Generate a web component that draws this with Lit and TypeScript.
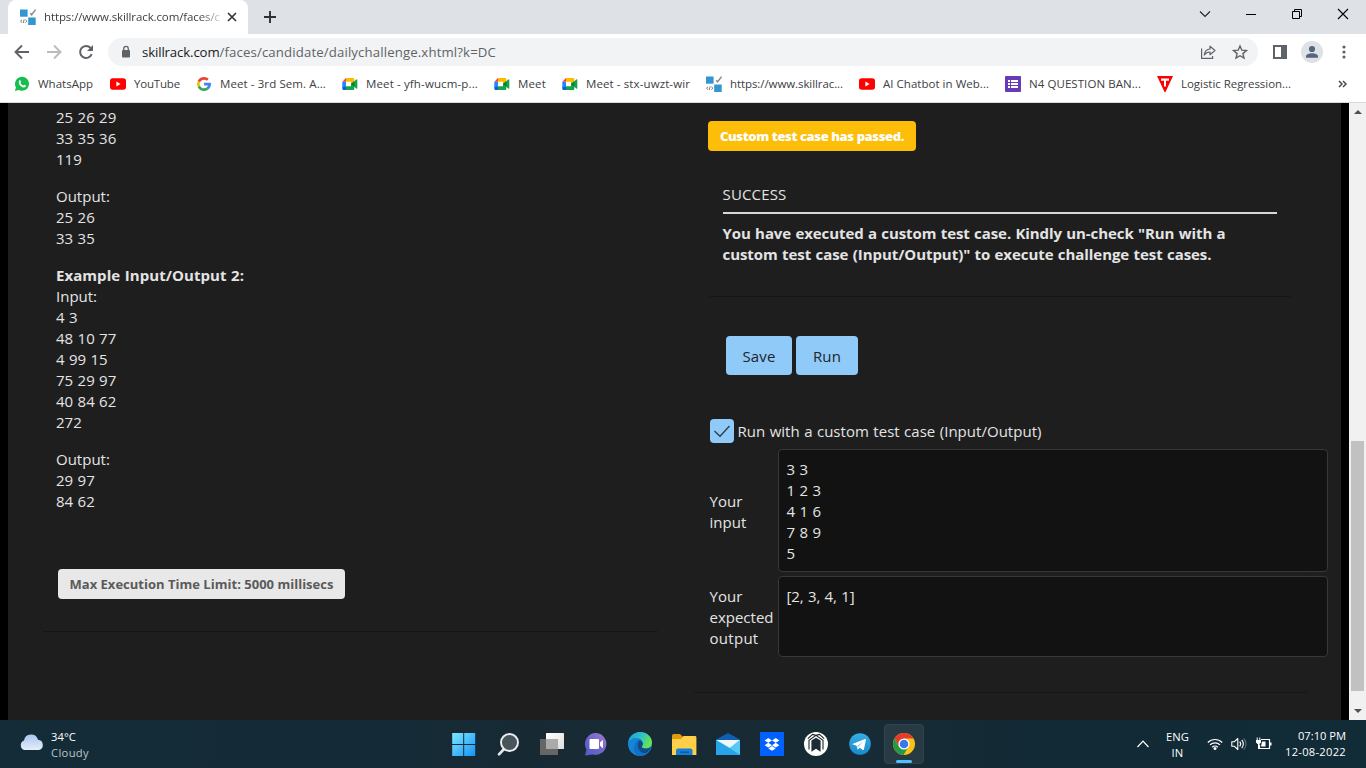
import { LitElement, html, css } from "lit";
import { customElement, property } from "lit/decorators.js";

/** One line of text whose tracking is adjusted so that it fills a given width. */
@customElement("fit-text")
class FitText extends LitElement {
  @property({ type: Number }) w = 0;
  static styles = css`
    :host { display: inline-block; white-space: pre; }
    .run { display: inline-block; white-space: pre; }
  `;
  render() {
    return html`<span class="run"><slot></slot></span>`;
  }
  firstUpdated() {
    const n = (this.textContent || "").length;
    const natural = this.renderRoot.querySelector(".run")!.getBoundingClientRect().width;
    if (n && this.w && natural) {
      this.style.letterSpacing = `${((this.w - natural) / n).toFixed(3)}px`;
      this.style.width = `${this.w}px`;
    }
  }
}

const skillIcon = html`<svg width="16" height="16" viewBox="0 0 16 16">
  <rect x="0" y="0.500" width="7.600" height="7.200" fill="#3397cf" /><rect x="8.200" y="8.500" width="7.500" height="7.500" fill="#3397cf" />
  <path d="M10.200 4.200l1.400 1.600L15.600 .6" fill="none" stroke="#8b8b8b" stroke-width="1.500" />
  <path d="M2 10.800L.5 12.200 2 13.600M5.400 10.800l1.500 1.400-1.500 1.400M4.200 10.400l-1 3.600" fill="none" stroke="#777" stroke-width="1" /></svg>`;

const youtube = html`<svg width="16" height="16" viewBox="0 0 16 16"><rect y="2.200" width="16" height="11.600" rx="2.800" fill="#f00" /><path d="M6.400 5.600v4.800L10.600 8z" fill="#fff" /></svg>`;

const meet = html`<svg width="16" height="16" viewBox="0 0 16 16">
  <path d="M.3 5.800L4 2v3.800z" fill="#ea4335" /><path d="M.3 5.800H4v4.600H.3z" fill="#2684fc" />
  <path d="M.3 10.200H4V14H1.500A1.200 1.200 0 0 1 .3 12.800z" fill="#0066da" />
  <path d="M4 2h7.300a1 1 0 0 1 1 1v3.600L9 9V5.800H4z" fill="#ffba00" />
  <path d="M4 10.200h5V7.500l3.300-1v6.500a1 1 0 0 1-1 1H4z" fill="#16a34f" />
  <path d="M9 8l5.300-4.600c.5-.4 1-.1 1 .4v8.400c0 .5-.5.8-1 .4z" fill="#16a34f" /><path d="M9 8l3.300-2.800v5.600z" fill="#00832d" /></svg>`;

const whatsapp = html`<svg width="16" height="16" viewBox="0 0 16 16"><path d="M1 15l.9-3.700A7 7 0 1 1 4.700 14z" fill="#14bf4d" />
  <path d="M5.300 4.400c.5-.5 1-.3 1.200.2l.5 1.200c.2.5-.5.9-.5 1.200.6 1.200 1.500 2 2.700 2.500.4 0 .8-1 1.200-.8l1.400.7c.4.2.2 1-.2 1.400-1.200 1.100-3 .6-4.600-.6C5.300 9 4 6.700 5.300 4.400z" fill="#fff" /></svg>`;

const google = html`<svg width="16" height="16" viewBox="0 0 48 48">
  <path fill="#EA4335" d="M24 11c3.300 0 6.200 1.200 8.500 3.300l5.700-5.700C34.500 5.200 29.600 3 24 3 15.800 3 8.700 7.700 5.200 14.600l6.700 5.200C13.500 14.800 18.300 11 24 11z" />
  <path fill="#FBBC05" d="M11.900 28.200a12.700 12.700 0 0 1 0-8.400l-6.700-5.200a21 21 0 0 0 0 18.800z" />
  <path fill="#34A853" d="M24 45c5.600 0 10.400-1.900 13.900-5.100l-6.500-5.100C29.600 36.100 27.100 37 24 37c-5.700 0-10.500-3.800-12.100-8.800l-6.700 5.200C8.700 40.300 15.800 45 24 45z" />
  <path fill="#4285F4" d="M44.500 20H24v8.500h11.800c-.6 2.700-2.100 4.900-4.400 6.300l6.500 5.100C42 36.200 45 30.500 45 24c0-1.400-.2-2.700-.5-4z" /></svg>`;

const listIcon = html`<svg width="16" height="16" viewBox="0 0 16 16"><rect width="16" height="16" rx="1" fill="#673ab7" />
  <path d="M3 4h2v2H3zM3 7h2v2H3zM3 10h2v2H3zM6 4h7v2H6zM6 7h7v2H6zM6 10h7v2H6z" fill="#fff" /></svg>`;

const tIcon = html`<svg width="16" height="16" viewBox="0 0 16 16"><path d="M0 0h16L8.500 16h-1z" fill="#f00" /><path d="M4 2.500h8v2.300H9V10.500H7V4.800H4z" fill="#fff" /></svg>`;

const bookmarks = [
  { icon: whatsapp, label: "WhatsApp", w: 55, next: 17 },
  { icon: youtube, label: "YouTube", w: 46, next: 16 },
  { icon: google, label: "Meet - 3rd Sem. A...", w: 106, next: 16 },
  { icon: meet, label: "Meet - yfh-wucm-p...", w: 112, next: 16 },
  { icon: meet, label: "Meet", w: 28, next: 16 },
  { icon: meet, label: "Meet - stx-uwzt-wir", w: 104, next: 16 },
  { icon: skillIcon, label: "https://www.skillrac...", w: 113, next: 16 },
  { icon: youtube, label: "AI Chatbot in Web...", w: 106, next: 16 },
  { icon: listIcon, label: "N4 QUESTION BAN...", w: 112, next: 16 },
  { icon: tIcon, label: "Logistic Regression...", w: 110, next: 0 },
];

const searchApp = html`<svg width="24" height="24" viewBox="0 0 24 24"><path d="M8.500 16.500L3 22.300" stroke="#e8e8e8" stroke-width="2.600" stroke-linecap="round" />
  <circle cx="13.500" cy="10.500" r="8.500" fill="#47555d" stroke="#eee" stroke-width="1.900" /></svg>`;

const apps = [
  html`<svg width="24" height="24" viewBox="0 0 24 24"><defs><linearGradient id="w" x1="0" y1="0" x2="1" y2="1"><stop offset="0" stop-color="#7de8ff" /><stop offset="1" stop-color="#1492f5" /></linearGradient></defs>
    <path d="M.2 1h11v11h-11zM12.200 1h11v11h-11zM.2 13h11v11h-11zM12.200 13h11v11h-11z" fill="url(#w)" /></svg>`,
  searchApp,
  html`<svg width="24" height="24" viewBox="0 0 24 24"><defs><linearGradient id="t" x1="0" y1="0" x2="1" y2="1"><stop offset="0" stop-color="#fff" /><stop offset="1" stop-color="#ddd" /></linearGradient></defs>
    <rect x="6" y="1" width="18" height="16" rx=".6" fill="url(#t)" /><rect x="0" y="7" width="18" height="16" rx=".6" fill="#666" /><rect x="6" y="7" width="12" height="10" fill="#aaa" /></svg>`,
  html`<svg width="24" height="24" viewBox="0 0 24 24"><defs><linearGradient id="c" x1="0" y1="1" x2="1" y2="0"><stop offset="0" stop-color="#5059c9" /><stop offset=".55" stop-color="#7468ca" /><stop offset="1" stop-color="#a87bd1" /></linearGradient></defs>
    <path d="M12.500 1a11 11 0 1 1-4.200 21.500L2 23.500c-.6 0-1-.5-.8-1l1.300-5A11 11 0 0 1 12.500 1z" fill="url(#c)" />
    <rect x="5.500" y="7" width="9.500" height="10" rx="1" fill="#fff" /><path d="M16 10.600l2.400-2.300c.3-.2.600 0 .6.300v7c0 .3-.3.500-.6.300L16 13.500z" fill="#fff" /></svg>`,
  html`<svg width="24" height="24" viewBox="0 0 24 24"><defs><linearGradient id="e1" x1="0" y1="0" x2="1" y2=".4"><stop offset="0" stop-color="#209fd8" /><stop offset=".55" stop-color="#2cc1c7" /><stop offset="1" stop-color="#65e353" /></linearGradient></defs>
    <circle cx="12" cy="12" r="12" fill="#1585d8" />
    <path d="M.2 11C.8 5 5.600 0 12 0c7 0 12 5 12 10.500 0 3.800-2.800 6-6 6-2.500 0-4.300-.9-4.300-1.800 0-.7 1.200-1.200 1.200-3C14.900 9 12.500 6 8.500 6 4 6 1 8 .2 11z" fill="url(#e1)" />
    <path d="M7.200 14.500c0-3.500 2.200-5.500 4.200-6.200 2.300.6 3.500 2 3.500 3.500 0 1.700-1.200 2.200-1.200 3 0 .9 1.800 1.800 4.300 1.800 1.700 0 3.200-.7 4.300-1.600.4-.2.700.1.500.5-2 4.700-6 7.500-10 7.500-3.300-1-5.600-4.500-5.600-8.500z" fill="#114a8b" />
    <path d="M11.400 8.500C9.200 11 9 17 13 20c1.700 1.300 4.600 1.500 6.300.8-2 2-4.500 3-7.300 3-4.500 0-6.800-5.200-6-9 .6-3.400 3-5.800 5.400-6.300z" fill="#1470c2" /></svg>`,
  html`<svg width="26" height="24" viewBox="0 0 26 24"><path d="M1 4.200C1 2.900 1.600 2 2.800 2H9l3 3v4H1z" fill="#e09a10" /><path d="M1 7h9l2.500-3H24c.8 0 1.400.6 1.400 1.400V23H1z" fill="#ffcf48" />
    <path d="M5 23v-4.500A2 2 0 0 1 7 16.500h12.500a2 2 0 0 1 2 2V23z" fill="#1580d8" /><rect x="9" y="19.500" width="9" height="1.600" rx=".6" fill="#0b5ba8" /></svg>`,
  html`<svg width="24" height="24" viewBox="0 0 24 24"><path d="M0 7.500L12 1l12 6.500V11H0z" fill="#0f5fae" /><path d="M0 8h24v15H0z" fill="#31b3ee" /><path d="M0 8h24L14 16z" fill="#eef7fd" /><path d="M24 8v15L13.800 16z" fill="#54c9f6" /><path d="M0 8l24 15H0z" fill="#27a5e8" /></svg>`,
  html`<svg width="24" height="24" viewBox="0 0 24 24"><rect width="24" height="24" fill="#0061fe" /><path d="M8.300 6l3.700 2.400-3.700 2.400-3.700-2.400zM15.700 6l3.700 2.400-3.700 2.400L12 8.400zM8.300 10.800l3.700 2.400-3.700 2.400-3.700-2.400zM15.700 10.800l3.700 2.400-3.700 2.400-3.700-2.400zM12 14l3.700 2.400L12 18.700l-3.700-2.300z" fill="#fff" /></svg>`,
  html`<svg width="24" height="24" viewBox="0 0 24 24"><circle cx="12" cy="12" r="12" fill="#fff" />
    <path d="M7.400 19.800V8.400L12 5.800l4.600 2.600v11.400L12 16.800z" fill="#1b2c35" />
    <path d="M5 17.500V8.200L12 3.400l7 4.800v9.300M12 3.400l3.400-1 4.800 4.200M12 3.400l-3.400-1-4.800 4.200" fill="none" stroke="#1b242a" stroke-width="1.100" /></svg>`,
  html`<svg width="24" height="24" viewBox="0 0 24 24"><defs><linearGradient id="g" x1="0" y1="0" x2="0" y2="1"><stop offset="0" stop-color="#37aee2" /><stop offset="1" stop-color="#168acd" /></linearGradient></defs><circle cx="12" cy="12" r="10.800" fill="url(#g)" />
    <path d="M5 11.700l12-4.700c.6-.2 1.100.1.900 1l-2 9.400c-.2.700-.6.900-1.200.5l-3-2.200-1.500 1.500c-.4.400-.7.200-.8-.3l-.8-3.200L5 12.600c-.6-.2-.6-.6 0-.9z" fill="#fff" /><path d="M9.200 13.800l6-4.200-4.700 5.200-.4 2z" fill="#a9cce2" /></svg>`,
  html`<svg width="24" height="24" viewBox="0 0 24 24"><circle cx="12" cy="12" r="11" fill="#fbc116" />
    <path d="M2.500 6.500A11 11 0 0 1 21.500 6.500H12l-4.800 8.200z" fill="#e33b2e" /><path d="M2.500 6.500A11 11 0 0 0 11.500 23l5-8.300H7.200z" fill="#229a48" />
    <circle cx="12" cy="12" r="5.600" fill="#fff" /><circle cx="12" cy="12" r="4.300" fill="#3a78ea" /></svg>`,
];

const leftLines: { t: string; b?: boolean }[][] = [
  [{ t: "25 26 29" }, { t: "33 35 36" }, { t: "119" }],
  [{ t: "Output:" }, { t: "25 26" }, { t: "33 35" }],
  [{ t: "Example Input/Output 2:", b: true }, { t: "Input:" }, { t: "4 3" }, { t: "48 10 77" }, { t: "4 99 15" }, { t: "75 29 97" }, { t: "40 84 62" }, { t: "272" }],
  [{ t: "Output:" }, { t: "29 97" }, { t: "84 62" }],
];

@customElement("app-root")
class AppRoot extends LitElement {
  static styles = css`
    :host { display: flex; flex-direction: column; width: 1366px; height: 768px; overflow: hidden; font-family: "Open Sans", "Noto Sans", sans-serif; background: #1e1e1e; }
    * { box-sizing: border-box; }
    svg { display: block; flex: none; }
    .tabs { height: 34px; flex: none; background: #dee1e6; display: flex; align-items: flex-start; }
    .tab { margin-left: 8px; width: 240px; height: 34px; background: #fff; border-radius: 8px 8px 0 0; display: flex; align-items: center; padding-left: 12px; }
    .title { width: 176px; margin-left: 8px; white-space: nowrap; font-size: 11.500px; line-height: 18px; color: #3c4043; -webkit-mask-image: linear-gradient(90deg, #000 155px, transparent 182px); mask-image: linear-gradient(90deg, #000 155px, transparent 182px); }
    .close { margin-left: 7px; }
    .plus { margin: 11px 0 0 16px; }
    .win { margin: 8px 17px 0 auto; display: flex; gap: 34px; }
    .bar { height: 36px; flex: none; background: #fff; display: flex; align-items: center; padding: 0 14px 0 14px; }
    .nav { display: flex; gap: 16px; }
    .omni { margin-left: 14px; width: 1150px; height: 28px; border-radius: 14px; background: #f1f3f4; display: flex; align-items: center; padding: 0 10px 0 11px; font-size: 13.200px; color: #5f6368; line-height: 20px; }
    .omni .url { margin-left: 9px; display: flex; }
    .host { color: #202124; }
    .omni .acts { margin-left: auto; display: flex; gap: 16px; }
    .right { margin-left: 14px; display: flex; align-items: center; }
    .avatar { margin-left: 13px; }
    .dots { margin-left: 19px; }
    .marks { height: 33px; flex: none; background: #fff; border-bottom: 1px solid #d8dadd; display: flex; align-items: center; padding: 0 18px 5px 14px; font-size: 11.500px; line-height: 18px; color: #3c4043; }
    .mark { display: flex; align-items: center; gap: 8px; }
    .more { margin-left: auto; }
    .view { height: 617px; flex: none; display: flex; background: #000; padding-left: 8px; color: #e4e4e4; font-size: 15px; line-height: 21px; word-spacing: .5px; }
    .page { width: 1333px; background: #1e1e1e; display: flex; margin-right: 8px; }
    .lcard { margin-left: 33px; width: 618px; height: 529px; border: 1px solid #1d1d1d; border-top: 0; border-bottom: 1px solid #161616; border-radius: 0 0 4px 4px; padding: 4px 0 0 14px; }
    .grp { margin-bottom: 16px; }
    .ln { white-space: pre; }
    .b { font-weight: 700; }
    .badge { display: flex; align-items: center; justify-content: center; height: 30px; border-radius: 4px; font-size: 13px; font-weight: 700; word-spacing: 0; }
    .limit { width: 287px; margin: 57px 0 0 2px; background: #e8e8e8; color: #5a5a5a; }
    .rcard { margin-left: 34px; width: 615px; height: 590px; border: 1px solid #1d1d1d; border-top: 0; border-bottom: 1px solid #161616; border-radius: 0 0 4px 4px; padding: 18px 0 0 14px; }
    .pass { width: 208px; background: #fdbe0a; color: #fff; font-weight: 800; }
    .result { width: 584px; height: 146px; padding: 33px 14px 0 13.500px; border: 1px solid #1d1d1d; border-top: 0; border-bottom-color: #161616; border-radius: 0 0 4px 4px; }
    .head { height: 30px; border-bottom: 2px solid #d6d6d6; margin-bottom: 9px; }
    .btns { display: flex; gap: 4px; margin: 39px 0 0 18px; }
    .btn { height: 39px; border-radius: 4px; background: #90caf9; color: #212529; display: flex; align-items: center; justify-content: center; padding-top: 2px; }
    .save { width: 66px; } .run { width: 62px; }
    .chk { display: flex; align-items: center; gap: 3.500px; margin: 44px 0 0 2px; height: 24px; }
    .box { width: 24px; height: 24px; border-radius: 4px; background: #90caf9; display: flex; align-items: center; justify-content: center; }
    .form { display: grid; grid-template-columns: 68.500px 550px; row-gap: 4px; margin: 6px 0 0 1.500px; width: 619px; align-items: center; }
    .area { background: #121212; border: 1px solid #383838; border-radius: 4px; padding: 9px 8px 0 7.500px; white-space: pre; }
    .a1 { height: 123px; } .a2 { height: 81px; }
    .lab { padding-top: 2px; }
    .scroll { width: 17px; background: #f1f1f1; display: flex; flex-direction: column; align-items: center; padding: 7px 0; }
    .thumb { width: 13px; height: 250px; background: #c1c1c1; margin-top: 327px; margin-bottom: auto; }
    .task { height: 48px; flex: none; background: linear-gradient(90deg, #142c38 0, #142b37 28%, #182a33 42%, #172b35 62%, #112a36 80%, #112b37 100%); display: flex; color: #fff; font-size: 11.200px; line-height: 16px; }
    .wx { display: flex; width: 430px; padding: 9px 0 0 19px; gap: 6px; }
    .cloudy { color: #bcc5ca; }
    .apps { display: flex; margin-left: 12px; }
    .app { width: 44px; height: 48px; display: flex; align-items: center; justify-content: center; position: relative; }
    .on::before { content: ""; position: absolute; inset: 4px 2px; border-radius: 4px; background: rgba(255,255,255,.08); border: 1px solid rgba(255,255,255,.05); }
    .on::after { content: ""; position: absolute; left: 14px; top: 40px; width: 16px; height: 3px; border-radius: 2px; background: #4cc2ff; }
    .app svg { position: relative; }
    .tray { margin-left: auto; display: flex; padding-right: 20px; align-items: center; }
    .lang { text-align: center; margin-left: 16px; margin-top: 1px; }
    .sys { display: flex; gap: 8px; margin-left: 18px; align-items: center; }
    .clock { text-align: right; margin-left: 13px; }
  `;

  render() {
    return html`
      <div class="tabs">
        <div class="tab">${skillIcon}<div class="title"><fit-text w="176">https://www.skillrack.com/faces/c</fit-text></div>
          <svg class="close" width="10" height="10" viewBox="0 0 10 10"><path d="M1 1l8 8M9 1L1 9" stroke="#333639" stroke-width="1.700" /></svg>
        </div>
        <svg class="plus" width="12" height="12" viewBox="0 0 12 12"><path d="M6 0v12M0 6h12" stroke="#2e3134" stroke-width="1.900" /></svg>
        <div class="win">
          <svg width="12" height="12" viewBox="0 0 12 12"><path d="M1 3.500l5 5 5-5" fill="none" stroke="#222" stroke-width="1.100" /></svg>
          <svg width="12" height="12" viewBox="0 0 12 12"><path d="M1 6.500h10" stroke="#000" /></svg>
          <svg width="12" height="12" viewBox="0 0 12 12"><path d="M1.500 3.500h7v7h-7zM3.500 3.500v-2h7v7h-2" fill="none" stroke="#000" /></svg>
          <svg width="12" height="12" viewBox="0 0 12 12"><path d="M1 1l10 10M11 1L1 11" stroke="#000" stroke-width="1.100" /></svg>
        </div>
      </div>
      <div class="bar">
        <div class="nav">
          <svg width="16" height="16" viewBox="0 0 16 16"><path d="M15 8H2M8 1.500L1.500 8 8 14.500" fill="none" stroke="#5f6368" stroke-width="1.900" /></svg>
          <svg width="16" height="16" viewBox="0 0 16 16"><path d="M1 8h13M8 1.500L14.500 8 8 14.500" fill="none" stroke="#babcbe" stroke-width="1.900" /></svg>
          <svg width="16" height="16" viewBox="0 0 16 16"><path d="M13.700 10.200A6 6 0 1 1 12.600 4" fill="none" stroke="#5f6368" stroke-width="2" /><path d="M15 1v6H9z" fill="#5f6368" /></svg>
        </div>
        <div class="omni">
          <svg width="14" height="14" viewBox="0 0 14 14"><rect x="3" y="5" width="8" height="7.500" rx="1" fill="#5f6368" /><path d="M4.700 5.500V3.700a2.300 2.300 0 0 1 4.600 0v1.800" fill="none" stroke="#5f6368" stroke-width="1.300" /></svg>
          <div class="url"><fit-text class="host" w="77.500">skillrack.com</fit-text><fit-text w="276.500">/faces/candidate/dailychallenge.xhtml?k=DC</fit-text></div>
          <div class="acts">
            <svg width="16" height="16" viewBox="0 0 16 16"><path d="M1.600 4.500v9.900h11V12" fill="none" stroke="#5f6368" stroke-width="1.200" /><path d="M4.300 11C4.800 7 7 5.200 10 5V2.200L15 6.500 10 10.700V8C7.500 8 5.800 8.900 4.300 11z" fill="none" stroke="#5f6368" stroke-width="1.200" stroke-linejoin="round" /></svg>
            <svg width="16" height="16" viewBox="0 0 16 16"><path d="M8 2l1.800 4.200 4.600.4-3.500 3 1.100 4.500L8 11.700l-4 2.400 1.100-4.500-3.500-3 4.600-.4z" fill="none" stroke="#5f6368" stroke-width="1.400" /></svg>
          </div>
        </div>
        <div class="right">
          <svg width="16" height="16" viewBox="0 0 16 16"><path d="M2 2h12v12H2z" fill="none" stroke="#5f6368" stroke-width="2" /><path d="M9 2h5v12H9z" fill="#5f6368" /></svg>
          <svg class="avatar" width="22" height="22" viewBox="0 0 22 22"><circle cx="11" cy="11" r="11" fill="#dee1e6" /><circle cx="11" cy="8" r="3.100" fill="#56657b" /><path d="M5 16.800v-1.500C5 13.200 8.500 12.200 11 12.200s6 1 6 3.100v1.500z" fill="#56657b" /></svg>
          <svg class="dots" width="4" height="14" viewBox="0 0 4 14"><circle cx="2" cy="2" r="1.600" fill="#5f6368" /><circle cx="2" cy="7" r="1.600" fill="#5f6368" /><circle cx="2" cy="12" r="1.600" fill="#5f6368" /></svg>
        </div>
      </div>
      <div class="marks">
        ${bookmarks.map((m) => html`<div class="mark" style="margin-right:${m.next}px">${m.icon}<fit-text w=${m.w}>${m.label}</fit-text></div>`)}
        <svg class="more" width="10" height="8" viewBox="0 0 10 8"><path d="M1 1l3 3-3 3M5 1l3 3-3 3" fill="none" stroke="#4a4d51" stroke-width="1.500" /></svg>
      </div>
      <div class="view">
        <div class="page">
          <div class="lcard">
            ${leftLines.map((g) => html`<div class="grp">${g.map((l) => (l.b ? html`<div class="b"><fit-text w="188">${l.t}</fit-text></div>` : html`<div class="ln">${l.t}</div>`))}</div>`)}
            <div class="badge limit"><fit-text w="264">Max Execution Time Limit: 5000 millisecs</fit-text></div>
          </div>
          <div class="rcard">
            <div class="badge pass"><fit-text w="184">Custom test case has passed.</fit-text></div>
            <div class="result">
              <div class="head"><fit-text w="64">SUCCESS</fit-text></div>
              <div class="b"><fit-text w="503">You have executed a custom test case. Kindly un-check "Run with a</fit-text></div>
              <div class="b"><fit-text w="489">custom test case (Input/Output)" to execute challenge test cases.</fit-text></div>
            </div>
            <div class="btns"><div class="btn save"><fit-text w="33">Save</fit-text></div><div class="btn run"><fit-text w="28">Run</fit-text></div></div>
            <div class="chk"><div class="box"><svg width="18" height="14" viewBox="0 0 18 14"><path d="M1.500 7L7 12.300 16.500 2" fill="none" stroke="#2c3a47" stroke-width="1.300" /></svg></div><fit-text w="304">Run with a custom test case (Input/Output)</fit-text></div>
            <div class="form">
              <div class="lab"><div><fit-text w="33">Your</fit-text></div><div><fit-text w="37">input</fit-text></div></div>
              <div class="area a1">${"3 3\n1 2 3\n4 1 6\n7 8 9\n5"}</div>
              <div class="lab"><div><fit-text w="33">Your</fit-text></div><div><fit-text w="64">expected</fit-text></div><div><fit-text w="49">output</fit-text></div></div>
              <div class="area a2"><fit-text w="68">[2, 3, 4, 1]</fit-text></div>
            </div>
          </div>
        </div>
        <div class="scroll">
          <svg width="8" height="4" viewBox="0 0 8 4"><path d="M0 4l4-4 4 4z" fill="#505050" /></svg>
          <div class="thumb"></div>
          <svg width="8" height="4" viewBox="0 0 8 4"><path d="M0 0l4 4 4-4z" fill="#505050" /></svg>
        </div>
      </div>
      <div class="task">
        <div class="wx">
          <svg width="26" height="28" viewBox="0 0 26 28"><defs><linearGradient id="cl" x1="0" y1="0" x2="0" y2="1"><stop offset="0" stop-color="#a9c6f3" /><stop offset="1" stop-color="#e6eef9" /></linearGradient></defs>
            <path d="M5.500 21a5 5 0 0 1-.5-9.500A7.200 7.200 0 0 1 19 10.800 5.200 5.200 0 0 1 20 21z" fill="url(#cl)" /></svg>
          <div><div><fit-text w="25">34°C</fit-text></div><div class="cloudy"><fit-text w="38">Cloudy</fit-text></div></div>
        </div>
        <div class="apps">${apps.map((a, i) => html`<div class="app ${i === apps.length - 1 ? "on" : ""}">${a}</div>`)}</div>
        <div class="tray">
          <svg width="14" height="10" viewBox="0 0 14 10"><path d="M1.500 8L7 2.200 12.500 8" fill="none" stroke="#fff" stroke-width="1.200" /></svg>
          <div class="lang"><div><fit-text w="23">ENG</fit-text></div><div><fit-text w="12">IN</fit-text></div></div>
          <div class="sys">
            <svg width="16" height="14" viewBox="0 0 16 14"><path d="M.8 5.500a10.200 10.200 0 0 1 14.400 0M3 7.900a7 7 0 0 1 10 0M5.200 10.200a4 4 0 0 1 5.600 0" fill="none" stroke="#fff" stroke-width="1.200" /><circle cx="8" cy="11.600" r="1.500" fill="#fff" /></svg>
            <svg width="16" height="14" viewBox="0 0 16 14"><path d="M.8 4.800h2.400L6.800 1.500v11L3.200 9.200H.8z" fill="none" stroke="#fff" stroke-width="1.100" stroke-linejoin="round" /><path d="M8.700 4.700a3.500 3.500 0 0 1 0 4.600M10.700 2.900a6 6 0 0 1 0 8.200" fill="none" stroke="#fff" stroke-width="1.100" /><path d="M12.700 1.300a8.200 8.200 0 0 1 0 11.400" fill="none" stroke="#5d707a" stroke-width="1.100" /></svg>
            <svg width="17" height="14" viewBox="0 0 17 14"><path d="M6 2.500h8.500v9H4.500v-4" fill="none" stroke="#fff" stroke-width="1.200" /><path d="M7 4.500h3.500v5H6zM15 5.500h1.500v3H15zM1 3h5v2.500L4.500 7h-2L1 5.500zM1.700.5h1V3h-1zM4.300.5h1V3h-1zM3 7h1v5H3z" fill="#fff" /></svg>
          </div>
          <div class="clock"><div><fit-text w="48">07:10 PM</fit-text></div><div><fit-text w="61">12-08-2022</fit-text></div></div>
        </div>
      </div>
    `;
  }
}
